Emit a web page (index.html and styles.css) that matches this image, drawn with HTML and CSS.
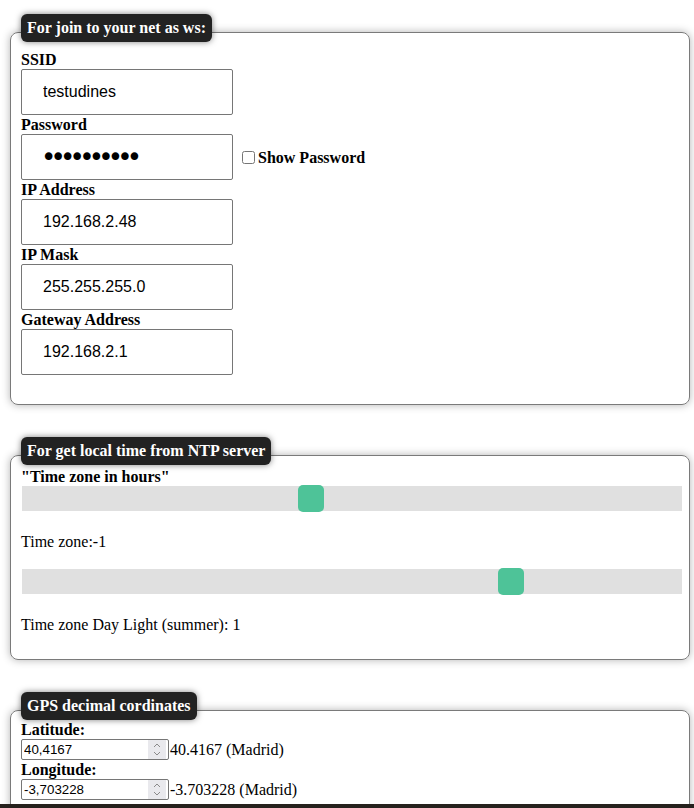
FILE: index.html
```html
<!DOCTYPE html>
<html lang="en">
<head>
<meta charset="utf-8">
<title>Settings</title>
<link rel="stylesheet" href="styles.css">
</head>
<body>
<div class="page">
  <fieldset class="box box-wifi">
    <legend class="tag"><span class="tag-box">For join to your net as ws:</span></legend>
    <div class="body">
      <label class="lbl" for="ssid">SSID</label>
      <input class="field" id="ssid" type="text" value="testudines">
      <label class="lbl" for="pass">Password</label>
      <div class="pw-row">
        <input class="field field-pw" id="pass" type="password" value="testudines">
        <label class="show"><input class="chk" type="checkbox">Show Password</label>
      </div>
      <label class="lbl" for="ip">IP Address</label>
      <input class="field" id="ip" type="text" value="192.168.2.48">
      <label class="lbl" for="mask">IP Mask</label>
      <input class="field" id="mask" type="text" value="255.255.255.0">
      <label class="lbl" for="gw">Gateway Address</label>
      <input class="field" id="gw" type="text" value="192.168.2.1">
    </div>
  </fieldset>

  <fieldset class="box box-ntp">
    <legend class="tag"><span class="tag-box">For get local time from NTP server</span></legend>
    <div class="body">
      <label class="lbl" for="tz">"Time zone in hours"</label>
      <input class="range" id="tz" type="range" min="-11" max="12" value="-1">
      <p class="note">Time zone:-1</p>
      <input class="range range-2" id="dst" type="range" min="-2" max="2" value="1">
      <p class="note">Time zone Day Light (summer): 1</p>
    </div>
  </fieldset>

  <fieldset class="box box-gps">
    <legend class="tag"><span class="tag-box">GPS decimal cordinates</span></legend>
    <div class="body">
      <label class="lbl" for="lat">Latitude:</label>
      <div class="num-row">
        <div class="numbox">
          <input class="num" id="lat" type="text" value="40,4167">
          <span class="spin"><svg width="10" height="17" viewBox="0 0 10 17"><polyline points="2,6 5,3 8,6" fill="none" stroke="#8a8a8a" stroke-width="1"/><polyline points="2,11 5,14 8,11" fill="none" stroke="#8a8a8a" stroke-width="1"/></svg></span>
        </div>
        <span class="hint">40.4167 (Madrid)</span>
      </div>
      <label class="lbl" for="lon">Longitude:</label>
      <div class="num-row">
        <div class="numbox">
          <input class="num" id="lon" type="text" value="-3,703228">
          <span class="spin"><svg width="10" height="17" viewBox="0 0 10 17"><polyline points="2,6 5,3 8,6" fill="none" stroke="#8a8a8a" stroke-width="1"/><polyline points="2,11 5,14 8,11" fill="none" stroke="#8a8a8a" stroke-width="1"/></svg></span>
        </div>
        <span class="hint">-3.703228 (Madrid)</span>
      </div>
    </div>
  </fieldset>
</div>
<div class="bottom-bar"></div>
</body>
</html>
```

FILE: styles.css
```css
html {
  scrollbar-width: none;
}
html, body {
  margin: 0;
  background: #fff;
}
body {
  font-family: "Liberation Serif", "Times New Roman", serif;
  color: #000;
}
.page {
  padding: 14px 4px 0 10px;
  display: flex;
  flex-direction: column;
  gap: 32px;
}
.box {
  margin: 0;
  min-width: 0;
  border: 1px solid #7a7a7a;
  border-radius: 8px;
  padding: 0 8px 29px 10px;
  box-shadow: 0 0 8px rgba(0, 0, 0, 0.3);
}
.tag {
  padding: 0 0 8px;
  margin: 0;
}
.tag-box {
  display: block;
  background: #222;
  color: #fff;
  font: bold 16px/18px "Liberation Serif", "Times New Roman", serif;
  padding: 5px 6px;
  border-radius: 6px;
  box-shadow: 0 0 6px rgba(0, 0, 0, 0.5);
}
.body {
  display: flex;
  flex-direction: column;
  align-items: flex-start;
}
.box-ntp {
  padding-bottom: 25px;
}
.box-ntp .body {
  margin-top: -6px;
}
.box-gps .body {
  margin-top: -8px;
}
.lbl {
  font-weight: bold;
  font-size: 16px;
  line-height: 19px;
}
.field {
  box-sizing: border-box;
  width: 212px;
  height: 46px;
  margin: 0;
  padding: 0 0 0 21px;
  border: 1px solid #767676;
  border-radius: 2px;
  font: 16px "Liberation Sans", Arial, sans-serif;
  color: #000;
  background: #fff;
}
.field-pw {
  font-family: "DejaVu Sans", sans-serif;
  font-size: 26px;
  letter-spacing: -5.8px;
  padding-left: 19px;
}
.pw-row {
  display: flex;
  align-items: center;
}
.show {
  display: flex;
  align-items: center;
  font-weight: bold;
  font-size: 16px;
  line-height: 19px;
}
.chk {
  width: 13px;
  height: 13px;
  margin: 1px 3px 0 9px;
}
.range {
  -webkit-appearance: none;
  appearance: none;
  width: 660px;
  height: 25px;
  margin: 0 0 0 1px;
  background: #d3d3d3;
  opacity: 0.7;
  outline: none;
}
.range::-webkit-slider-thumb {
  -webkit-appearance: none;
  appearance: none;
  width: 26px;
  height: 27px;
  border-radius: 5px;
  background: #04aa6d;
  cursor: pointer;
}
.range-2 {
  margin-top: 18px;
}
.note {
  margin: 22px 0 0;
  font-size: 16px;
  line-height: 18px;
}
.num-row {
  display: flex;
  align-items: center;
}
.numbox {
  box-sizing: border-box;
  width: 148px;
  height: 21px;
  display: flex;
  border: 1px solid #767676;
  border-radius: 2px;
  background: #fff;
}
.num {
  flex: 1;
  min-width: 0;
  margin: 0;
  padding: 0 0 0 2px;
  border: 0;
  outline: none;
  background: transparent;
  font: 13.33px "Liberation Sans", Arial, sans-serif;
  color: #000;
}
.spin {
  width: 18px;
  margin: 0 2px 0 0;
  background: #e9e9ed;
  display: flex;
  align-items: center;
  justify-content: center;
}
.hint {
  font-size: 16px;
  line-height: 18px;
  margin-left: 1px;
}
.bottom-bar {
  position: fixed;
  left: 0;
  right: 0;
  bottom: 0;
  height: 4px;
  background: #26211d;
}
```
